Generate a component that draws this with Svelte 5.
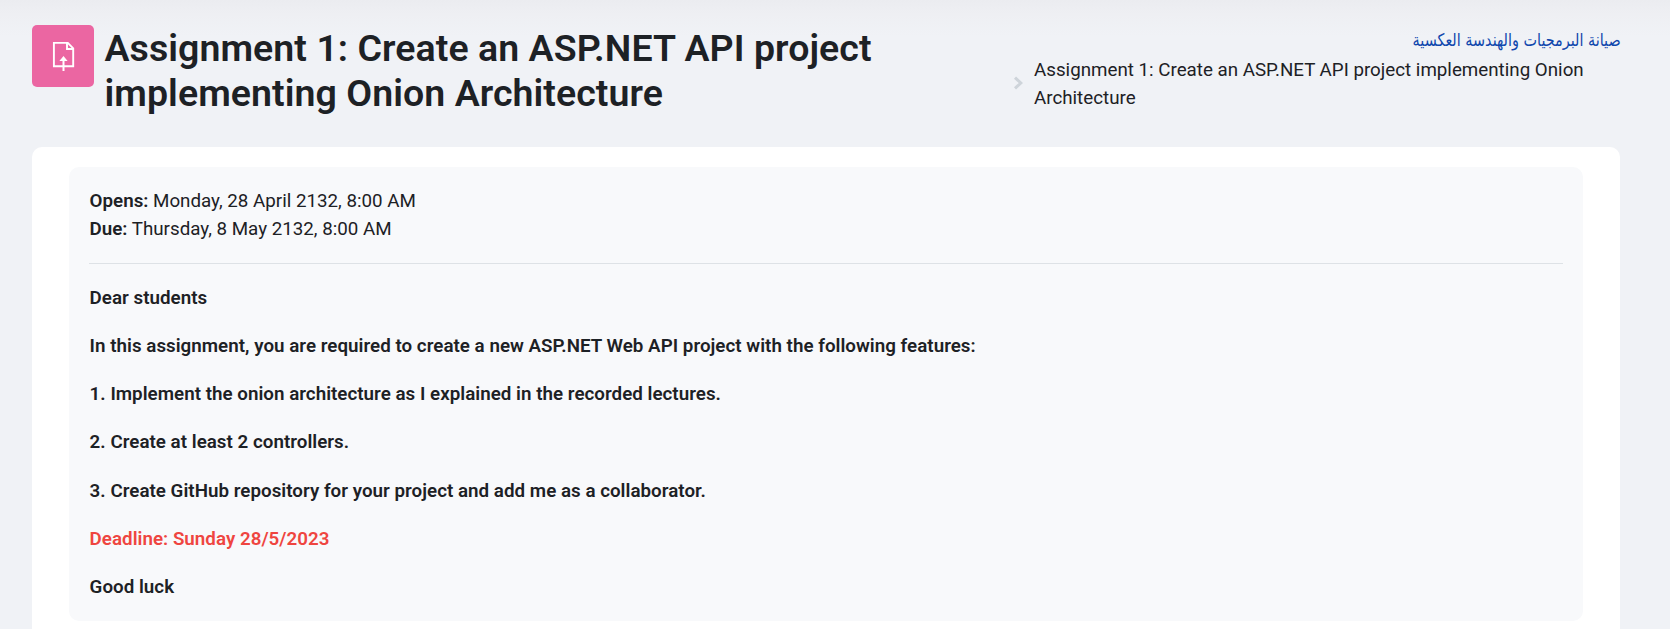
<script>
  const dates = [
    { label: 'Opens:', value: 'Monday, 28 April 2132, 8:00 AM' },
    { label: 'Due:', value: 'Thursday, 8 May 2132, 8:00 AM' },
  ];

  const intro = [
    { text: 'Dear students' },
    { text: 'In this assignment, you are required to create a new ASP.NET Web API project with the following features:' },
    { text: '1. Implement the onion architecture as I explained in the recorded lectures.' },
    { text: '2. Create at least 2 controllers.' },
    { text: '3. Create GitHub repository for your project and add me as a collaborator.' },
    { text: 'Deadline: Sunday 28/5/2023', alert: true },
    { text: 'Good luck' },
  ];
</script>

<div class="page">
  <header>
    <div class="heading">
      <div class="icon">
        <svg viewBox="0 0 30 30" width="30" height="30" fill="none" stroke="#fff">
          <path d="M4.9 1.9H18.8L24.2 7.3V25.2H4.9Z" stroke-width="1.9" />
          <path d="M18 1.9V8H24.2" stroke-width="1.9" />
          <path d="M14.5 20V30" stroke-width="2" />
          <path d="M14.5 15L18.6 20H10.4Z" fill="#fff" stroke="none" />
        </svg>
      </div>
      <h1>Assignment 1: Create an ASP.NET API project implementing Onion Architecture</h1>
    </div>
    <nav>
      <ol>
        <li class="course"><a href="#course" dir="rtl" lang="ar">صيانة البرمجيات والهندسة العكسية</a></li>
        <li class="current">
          <svg viewBox="0 0 11 14" width="11" height="14">
            <path d="M2 1.6L7.8 7L2 12.4" fill="none" stroke="#ced4da" stroke-width="3" />
          </svg>
          <span>Assignment 1: Create an ASP.NET API project implementing Onion Architecture</span>
        </li>
      </ol>
    </nav>
  </header>

  <main>
    <section>
      <div class="dates">
        {#each dates as d}
          <div><strong>{d.label}</strong> {d.value}</div>
        {/each}
      </div>
      <div class="intro">
        {#each intro as p}
          <p class:alert={p.alert}>{p.text}</p>
        {/each}
      </div>
    </section>
  </main>
</div>

<style>
  :global(body) {
    margin: 0;
    overflow: hidden;
    background: #f0f2f6;
  }
  .page {
    box-sizing: border-box;
    height: 629px;
    overflow: hidden;
    display: flex;
    flex-direction: column;
    padding: 0 50px 0 32px;
    background: linear-gradient(#ebecf0 0, #eeeff3 14px, #f0f2f6 36px);
    color: #1d2125;
    font: 400 18.75px/28.125px Roboto, "Liberation Sans", sans-serif;
  }
  header {
    height: 147px;
    flex: none;
    display: flex;
    justify-content: space-between;
  }
  .heading {
    display: flex;
    gap: 10.5px;
    width: 900px;
    padding-top: 25px;
  }
  .icon {
    flex: none;
    width: 62px;
    height: 62px;
    display: grid;
    place-items: center;
    border-radius: 5px;
    background: #eb66a2;
  }
  .icon svg {
    margin-left: 2px;
  }
  h1 {
    margin: 0;
    padding-top: 1px;
    font-size: 37.5px;
    line-height: 45px;
    font-weight: 600;
    letter-spacing: 0.06px;
  }
  nav {
    width: 607px;
    padding-top: 26px;
  }
  ol {
    margin: 0;
    padding: 0;
    list-style: none;
  }
  .course {
    display: flex;
    justify-content: flex-end;
  }
  .course a {
    margin-right: -1px;
    color: #0f47ad;
    text-decoration: none;
    font-family: "DejaVu Sans Condensed", "DejaVu Sans", sans-serif;
    font-size: 17.5px;
    font-stretch: condensed;
    transform: scaleX(0.914);
    transform-origin: right;
  }
  .current {
    display: flex;
    align-items: center;
    gap: 10px;
    margin-top: 1.5px;
  }
  .current svg {
    flex: none;
    margin-bottom: 2px;
  }
  main {
    flex: 1;
    padding: 20px 37px 0;
    border-radius: 10px 10px 0 0;
    background: #fff;
  }
  section {
    padding: 20px;
    border-radius: 10px;
    background: #f8f9fb;
  }
  .dates {
    padding-bottom: 20px;
    border-bottom: 1px solid #dee2e6;
  }
  .dates div {
    padding-left: 0.6px;
  }
  strong {
    font-weight: 600;
  }
  .intro {
    display: flex;
    flex-direction: column;
    gap: 20px;
    padding: 19.85px 0 0.15px 0.6px;
    font-weight: 600;
    letter-spacing: 0.028px;
  }
  p {
    margin: 0;
  }
  .alert {
    color: #ef4540;
  }
</style>
